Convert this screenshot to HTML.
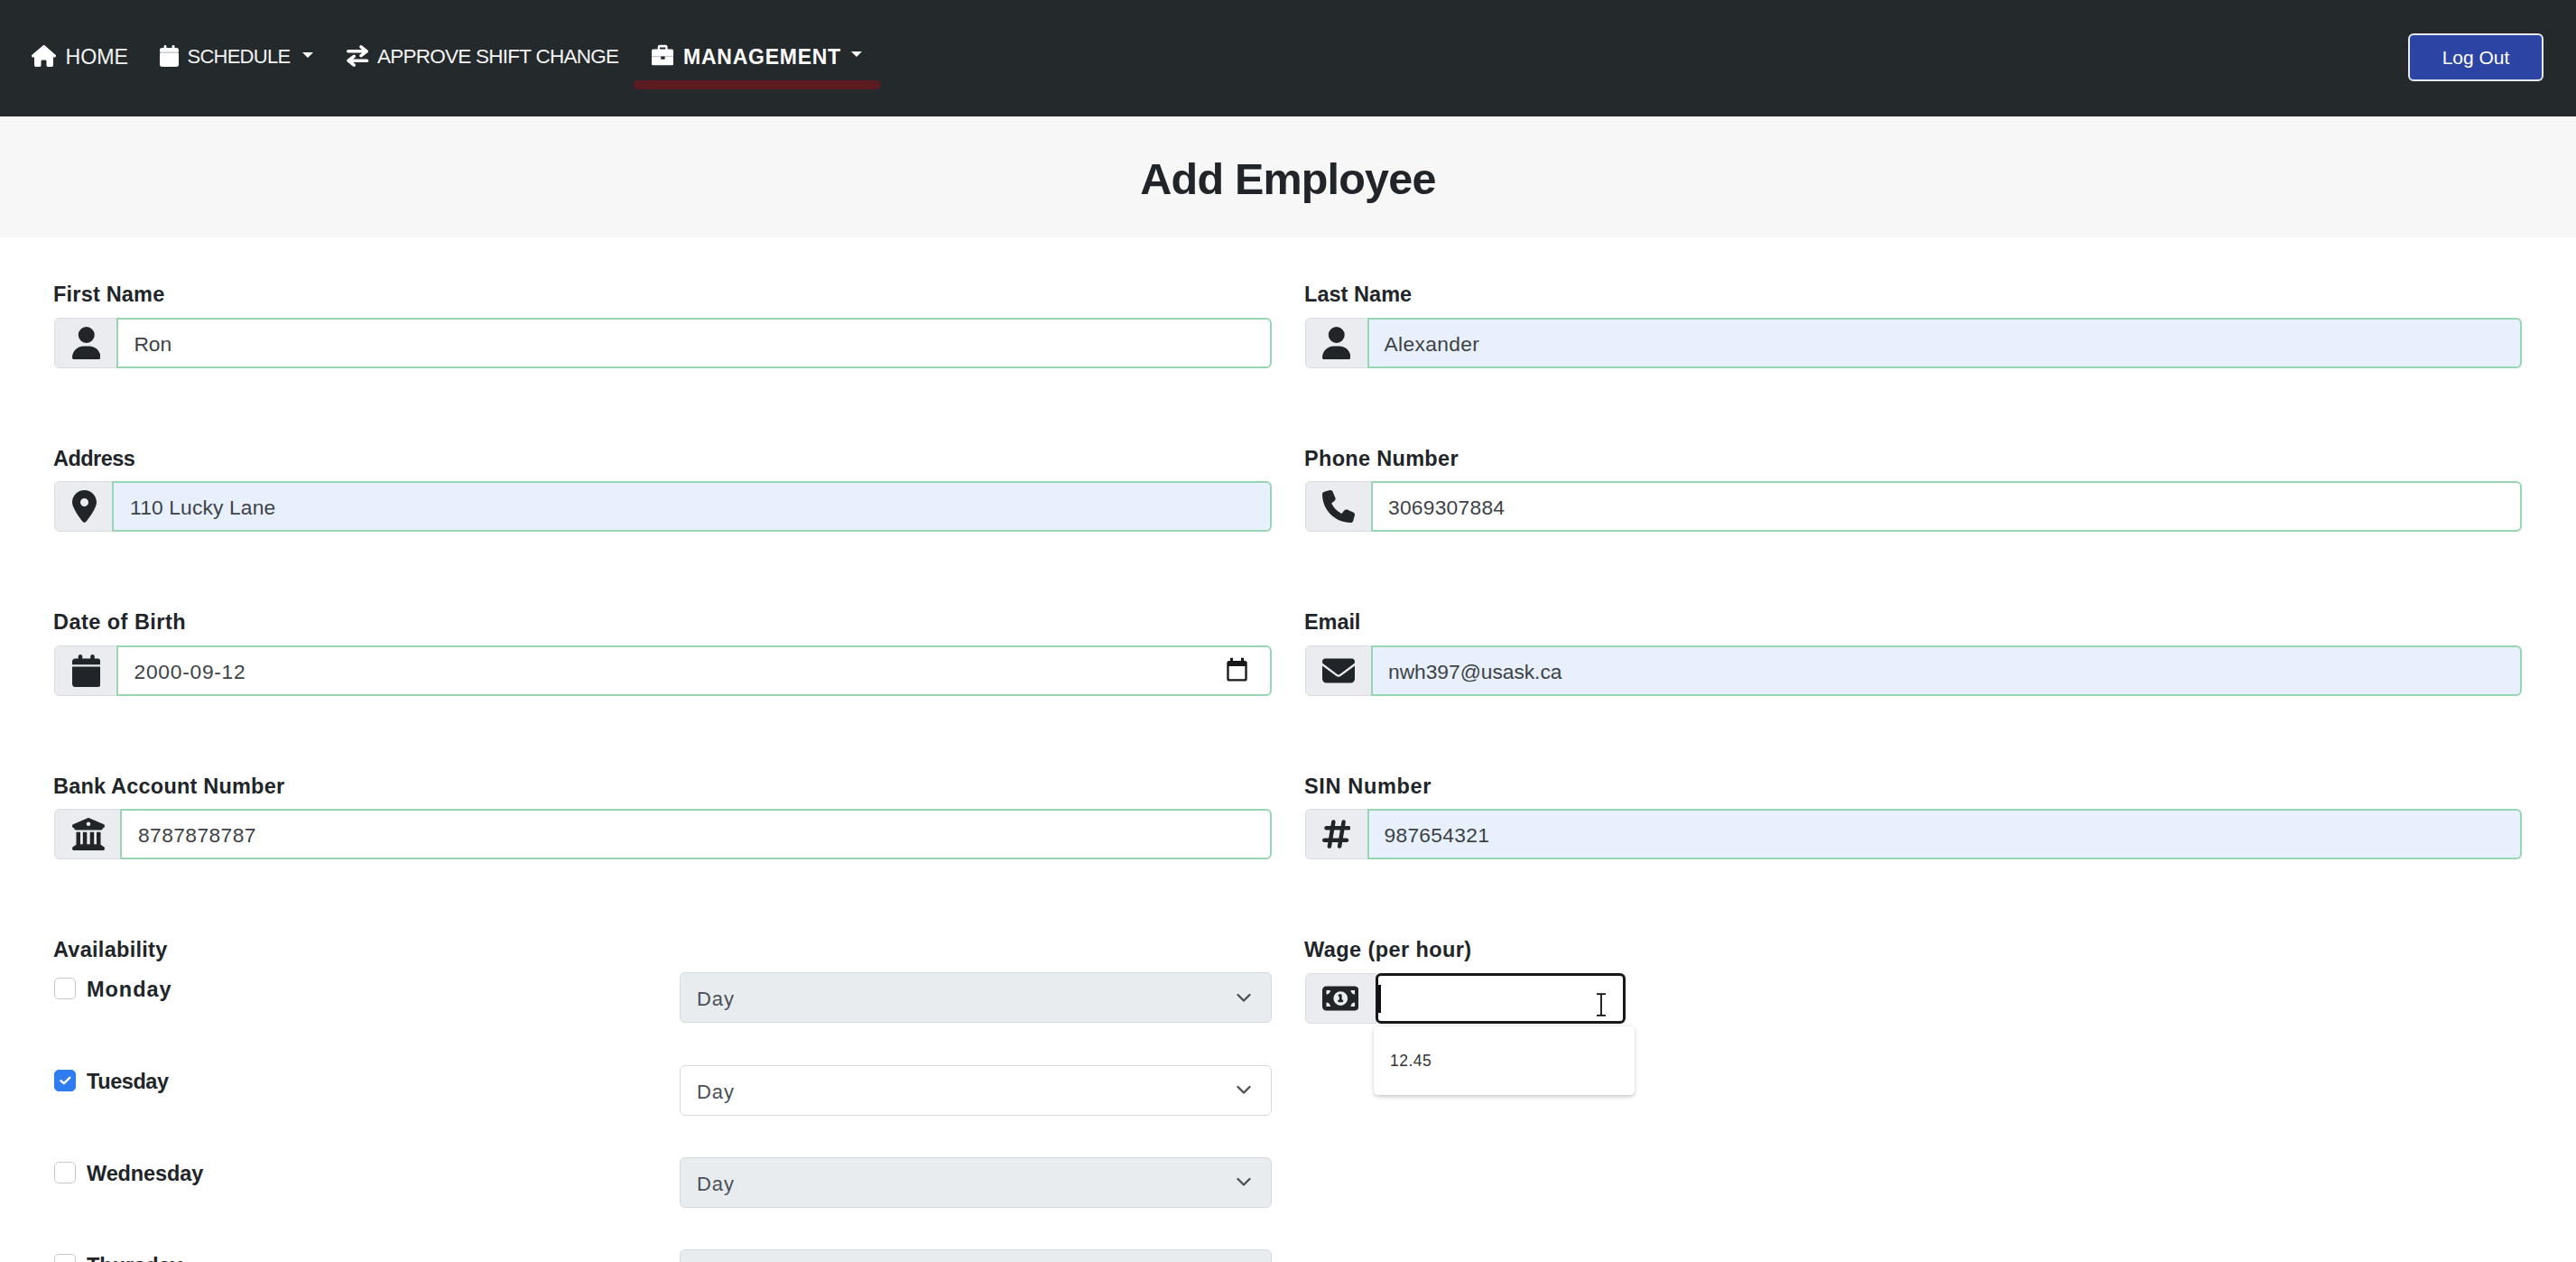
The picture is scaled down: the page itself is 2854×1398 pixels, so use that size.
<!DOCTYPE html>
<html><head><meta charset="utf-8"><title>Add Employee</title>
<style>
*{box-sizing:border-box;margin:0;padding:0}
html,body{width:2854px;height:1398px;overflow:hidden;background:#fff;font-family:"Liberation Sans",sans-serif;color:#212529}
.abs{position:absolute}
#nav{position:absolute;left:0;top:0;width:2854px;height:129px;background:#24292c}
.nt{position:absolute;top:47.7px;height:30px;line-height:30px;font-size:23px;color:#f4f4f4;white-space:nowrap}
.caret{position:absolute;width:0;height:0;border-left:6.7px solid transparent;border-right:6.7px solid transparent;border-top:6.7px solid #fff}
#logout{position:absolute;left:2668px;top:37px;width:150px;height:53px;border:2px solid #e6eaec;border-radius:6px;background:#2c44a4;color:#fff;font-size:21px;text-align:center;line-height:49px}
#band{position:absolute;left:0;top:129px;width:2854px;height:134px;background:#f7f7f7}
#title{position:absolute;left:0;top:170px;width:2854px;text-align:center;font-size:48.5px;font-weight:bold;line-height:56px;letter-spacing:-0.8px;color:#212529}
.lbl{position:absolute;font-size:23.5px;font-weight:bold;line-height:28px;color:#212529;white-space:nowrap}
.ibox{position:absolute;height:56px;background:#eaecef;border:1.5px solid #d9dde0;border-radius:6px 0 0 6px}
.inp{position:absolute;height:56px;border:2px solid #98d6b3;border-radius:0 6px 6px 0;background:#fff;font-size:22.8px;line-height:52px;padding-top:1px;padding-left:17px;color:#3d4247;white-space:nowrap}
.af{background:#e8f0fd}
.sel{position:absolute;left:753px;width:656px;height:56px;border:1.5px solid #d6dadd;border-radius:6px;background:#e9ecef;font-size:22px;line-height:53px;padding-top:2px;padding-left:18px;color:#495057}
.sel svg{position:absolute;right:22px;top:21.5px}
.cb{position:absolute;left:60px;width:24px;height:24px;border:1.5px solid #c4c8cc;border-radius:5px;background:#fff}
.day{position:absolute;left:96px;font-size:23.5px;font-weight:bold;line-height:28px;color:#212529}
</style></head><body>
<div id="nav">
<svg class="abs" style="left:35px;top:50px" width="27" height="24" viewBox="0 0 576 512"><path fill="#fff" d="M575.8 255.5c0 18-15 32.1-32 32.1h-32l.7 160.2c0 2.7-.2 5.4-.5 8.1V472c0 22.1-17.9 40-40 40H456c-1.1 0-2.2 0-3.3-.1-1.4.1-2.8.1-4.2.1H416 392c-22.1 0-40-17.9-40-40V448 384c0-17.7-14.3-32-32-32H256c-17.7 0-32 14.3-32 32v64 24c0 22.1-17.9 40-40 40H160 128.1c-1.5 0-3-.1-4.5-.2-1.2.1-2.4.2-3.6.2H104c-22.1 0-40-17.9-40-40V360c0-.9 0-1.9.1-2.8V287.6H32c-18 0-32-14-32-32.1 0-9 3-17 10-24L266.4 8c7-7 15-8 22-8s15 2 21 7L564.8 231.5c8 7 12 15 11 24z"/></svg>
<div class="nt" style="left:72.5px;font-size:23.2px;letter-spacing:0px">HOME</div>
<svg class="abs" style="left:177px;top:50px" width="21" height="24" viewBox="0 0 448 512"><rect x="8" y="150" width="432" height="50" fill="#c9cdd1"/><path fill="#fff" d="M96 32V64H48C21.5 64 0 85.5 0 112v48H448V112c0-26.5-21.5-48-48-48H352V32c0-17.7-14.3-32-32-32s-32 14.3-32 32V64H160V32c0-17.7-14.3-32-32-32S96 14.3 96 32zM448 192H0V464c0 26.5 21.5 48 48 48H400c26.5 0 48-21.5 48-48V192z"/></svg>
<div class="nt" style="left:207.5px;font-size:22px;letter-spacing:-0.75px">SCHEDULE</div>
<div class="caret" style="left:334.5px;top:58px"></div>
<svg class="abs" style="left:378px;top:44px" width="40" height="36" viewBox="0 0 40 36"><g fill="none" stroke="#fff" stroke-width="3.6" stroke-linecap="round" stroke-linejoin="round"><path d="M7.8 12.8H28M22 7.9L28.2 12.8L22 17.7"/><path d="M28.6 23.2H8.2M14.2 18.3L8 23.2L14.2 28.1"/></g></svg>
<div class="nt" style="left:418px;font-size:22.5px;letter-spacing:-0.75px">APPROVE SHIFT CHANGE</div>
<svg class="abs" style="left:715px;top:44px" width="40" height="36" viewBox="0 0 40 36"><rect x="7" y="10.6" width="24" height="17.7" rx="1.6" fill="#fff"/><path fill="#fff" d="M13.7 11.5V8a2.3 2.3 0 0 1 2.3-2.3h6.3a2.3 2.3 0 0 1 2.3 2.3v3.5h-2.3V8.6h-6.3v2.9z"/><rect x="7" y="17.9" width="24" height="1.3" fill="#c3c7cb"/><rect x="17.1" y="18.6" width="4.6" height="3.1" rx="1" fill="#24292c"/></svg>
<div class="nt" style="left:757px;font-weight:bold;color:#fff;font-size:23px;letter-spacing:0.75px">MANAGEMENT</div>
<div class="caret" style="left:943.3px;top:57px"></div>
<div class="abs" style="left:702px;top:89px;width:274px;height:10px;border-radius:5px;background:#5c1a21"></div>
<div id="logout">Log Out</div>
</div>
<div id="band"></div>
<div id="title">Add Employee</div>
<div id="form">
<div class="lbl" style="left:59px;top:312.2px;letter-spacing:0.2px;">First Name</div>
<div class="ibox" style="left:60px;top:351.5px;width:69.5px"></div>
<svg class="abs" style="left:79.5px;top:361.7px" width="31.50" height="36" viewBox="0 0 448 512"><path fill="#212529" d="M224 256A128 128 0 1 0 224 0a128 128 0 1 0 0 256zm-45.7 48C79.8 304 0 383.8 0 482.3C0 498.7 13.3 512 29.7 512H418.3c16.4 0 29.7-13.3 29.7-29.7C448 383.8 368.2 304 269.7 304H178.3z"/></svg>
<div class="inp" style="left:128.5px;top:351.5px;width:1280.5px;padding-left:18px;letter-spacing:-0.1px;">Ron</div>
<div class="lbl" style="left:1445px;top:312.2px;letter-spacing:0.037px;">Last Name</div>
<div class="ibox" style="left:1446px;top:351.5px;width:69.5px"></div>
<svg class="abs" style="left:1464.5px;top:361.7px" width="31.50" height="36" viewBox="0 0 448 512"><path fill="#212529" d="M224 256A128 128 0 1 0 224 0a128 128 0 1 0 0 256zm-45.7 48C79.8 304 0 383.8 0 482.3C0 498.7 13.3 512 29.7 512H418.3c16.4 0 29.7-13.3 29.7-29.7C448 383.8 368.2 304 269.7 304H178.3z"/></svg>
<div class="inp af" style="left:1514.5px;top:351.5px;width:1279.5px;padding-left:17px;letter-spacing:0.35px;">Alexander</div>
<div class="lbl" style="left:59px;top:493.8px;letter-spacing:-0.55px;">Address</div>
<div class="ibox" style="left:60px;top:533.0px;width:65.0px"></div>
<svg class="abs" style="left:79.5px;top:543.2px" width="27.00" height="36" viewBox="0 0 384 512"><path fill="#212529" d="M215.7 499.2C267 435 384 279.4 384 192C384 86 298 0 192 0S0 86 0 192c0 87.4 117 243 168.3 307.2c12.3 15.3 35.1 15.3 47.4 0zM192 128a64 64 0 1 1 0 128 64 64 0 1 1 0-128z"/></svg>
<div class="inp af" style="left:124.0px;top:533.0px;width:1285.0px;padding-left:18px;letter-spacing:0.146px;">110 Lucky Lane</div>
<div class="lbl" style="left:1445px;top:493.8px;letter-spacing:0.309px;">Phone Number</div>
<div class="ibox" style="left:1446px;top:533.0px;width:74.0px"></div>
<svg class="abs" style="left:1464.5px;top:543.2px" width="36.00" height="36" viewBox="0 0 512 512"><path fill="#212529" d="M164.9 24.6c-7.7-18.6-28-28.5-47.4-23.2l-88 24C12.1 30.2 0 46 0 64C0 311.4 200.6 512 448 512c18 0 33.8-12.1 38.6-29.5l24-88c5.3-19.4-4.6-39.7-23.2-47.4l-96-40c-16.3-6.8-35.2-2.1-46.3 11.6L304.7 368C234.3 334.7 177.3 277.7 144 207.3L193.3 167c13.7-11.2 18.4-30 11.6-46.3l-40-96z"/></svg>
<div class="inp" style="left:1519.0px;top:533.0px;width:1275.0px;padding-left:17px;letter-spacing:0.244px;">3069307884</div>
<div class="lbl" style="left:59px;top:675.2px;letter-spacing:0.467px;">Date of Birth</div>
<div class="ibox" style="left:60px;top:714.5px;width:69.5px"></div>
<svg class="abs" style="left:79.5px;top:724.7px" width="31.50" height="36" viewBox="0 0 448 512"><path fill="#212529" d="M96 32V64H48C21.5 64 0 85.5 0 112v48H448V112c0-26.5-21.5-48-48-48H352V32c0-17.7-14.3-32-32-32s-32 14.3-32 32V64H160V32c0-17.7-14.3-32-32-32S96 14.3 96 32zM448 192H0V464c0 26.5 21.5 48 48 48H400c26.5 0 48-21.5 48-48V192z"/></svg>
<div class="inp" style="left:128.5px;top:714.5px;width:1280.5px;padding-left:18px;letter-spacing:0.733px;">2000-09-12</div>
<svg class="abs" style="left:1358.2px;top:727.5px" width="25" height="27.5" viewBox="0 0 24 27"><path fill="#18191b" d="M4.6 0.8h3v3.2h8.8V0.8h3v3.2h1.1a2.5 2.5 0 0 1 2.5 2.5v17a2.5 2.5 0 0 1-2.5 2.5h-17A2.5 2.5 0 0 1 1 23.5v-17A2.5 2.5 0 0 1 3.5 4h1.1zM3.3 9.8v13.2c0 .5.4.9.9.9h15.6c.5 0 .9-.4.9-.9V9.8z"/></svg>
<div class="lbl" style="left:1445px;top:675.2px;letter-spacing:-0.075px;">Email</div>
<div class="ibox" style="left:1446px;top:714.5px;width:74.0px"></div>
<svg class="abs" style="left:1464.5px;top:724.7px" width="36.00" height="36" viewBox="0 0 512 512"><path fill="#212529" d="M48 64C21.5 64 0 85.5 0 112c0 15.1 7.1 29.3 19.2 38.4L236.8 313.6c11.4 8.5 27 8.5 38.4 0L492.8 150.4c12.1-9.1 19.2-23.3 19.2-38.4c0-26.5-21.5-48-48-48H48zM0 176V384c0 35.3 28.7 64 64 64H448c35.3 0 64-28.7 64-64V176L294.4 339.2c-22.8 17.1-54 17.1-76.8 0L0 176z"/></svg>
<div class="inp af" style="left:1519.0px;top:714.5px;width:1275.0px;padding-left:17px;letter-spacing:-0.036px;">nwh397@usask.ca</div>
<div class="lbl" style="left:59px;top:856.8px;letter-spacing:0.2px;">Bank Account Number</div>
<div class="ibox" style="left:60px;top:896.0px;width:74.0px"></div>
<svg class="abs" style="left:79.5px;top:906.2px" width="36.00" height="36" viewBox="0 0 512 512"><path fill="#212529" d="M243.4 2.6l-224 96c-14 6-21.8 21-18.7 35.8S16.8 160 32 160v8c0 13.3 10.7 24 24 24H456c13.3 0 24-10.7 24-24v-8c15.2 0 28.3-10.7 31.3-25.6s-4.8-29.9-18.7-35.8l-224-96c-8-3.4-17.2-3.4-25.2 0zM128 224H64V420.3c-.6 .3-1.200 .7-1.8 1.1l-48 32c-11.7 7.8-17 22.4-12.9 35.9S17.9 512 32 512H480c14.1 0 26.5-9.200 30.6-22.7s-1.1-28.1-12.9-35.9l-48-32c-.6-.4-1.2-.7-1.8-1.1V224H384V416H344V224H280V416H232V224H168V416H128V224zM256 64a32 32 0 1 1 0 64 32 32 0 1 1 0-64z"/></svg>
<div class="inp" style="left:133.0px;top:896.0px;width:1276.0px;padding-left:18px;letter-spacing:0.4px;">8787878787</div>
<div class="lbl" style="left:1445px;top:856.8px;letter-spacing:0.644px;">SIN Number</div>
<div class="ibox" style="left:1446px;top:896.0px;width:69.5px"></div>
<svg class="abs" style="left:1464.5px;top:906.2px" width="31.50" height="36" viewBox="0 0 448 512"><path fill="#212529" d="M181.3 32.4c17.4 2.9 29.2 19.4 26.3 36.8L197.8 128h95.1l11.5-69.3c2.9-17.4 19.4-29.2 36.8-26.3s29.2 19.4 26.3 36.8L357.8 128H416c17.7 0 32 14.3 32 32s-14.3 32-32 32H347.1L325.8 320H384c17.7 0 32 14.3 32 32s-14.300 32-32 32H315.1l-11.5 69.3c-2.9 17.4-19.4 29.2-36.8 26.3s-29.2-19.4-26.3-36.8l9.8-58.7H155.1l-11.5 69.3c-2.9 17.4-19.4 29.2-36.8 26.3s-29.2-19.4-26.3-36.8L90.2 384H32c-17.7 0-32-14.3-32-32s14.3-32 32-32h68.9l21.3-128H64c-17.7 0-32-14.3-32-32s14.3-32 32-32h68.9l11.5-69.3c2.9-17.4 19.4-29.2 36.8-26.3zM187.1 192L165.8 320h95.1l21.3-128H187.1z"/></svg>
<div class="inp af" style="left:1514.5px;top:896.0px;width:1279.5px;padding-left:17px;letter-spacing:0.275px;">987654321</div>
<div class="lbl" style="left:59px;top:1038.2px;letter-spacing:0.273px;">Availability</div>
<div class="lbl" style="left:1445px;top:1038.2px;letter-spacing:0.421px;">Wage (per hour)</div>
<div class="ibox" style="left:1446px;top:1077.5px;width:78.5px"></div>
<svg class="abs" style="left:1464.5px;top:1087.7px" width="40.50" height="36" viewBox="0 0 576 512"><path fill="#212529" d="M64 64C28.7 64 0 92.7 0 128V384c0 35.3 28.7 64 64 64H512c35.3 0 64-28.7 64-64V128c0-35.3-28.7-64-64-64H64zm64 320H64V320c35.3 0 64 28.7 64 64zM64 192V128h64c0 35.3-28.7 64-64 64zM448 384c0-35.3 28.7-64 64-64v64H448zm64-192c-35.3 0-64-28.7-64-64h64v64zM176 256a112 112 0 1 1 224 0 112 112 0 1 1 -224 0zm76-48c0 9.7 6.9 17.7 16 19.6V276h-4c-11 0-20 9-20 20s9 20 20 20h24 24c11 0 20-9 20-20s-9-20-20-20h-4V208c0-11-9-20-20-20H272c-11 0-20 9-20 20z"/></svg>
<div class="abs" style="left:1523.5px;top:1077.5px;width:277.5px;height:56px;border:3px solid #16181a;border-radius:6px;background:#fff"></div>
<div class="abs" style="left:1527px;top:1090.5px;width:2.5px;height:31px;background:#111"></div>
<svg class="abs" style="left:1768px;top:1100px" width="12" height="26" viewBox="0 0 12 26"><path d="M1 1.2h10M1 24.8h10M6 1.2v23.6" stroke="#111" stroke-width="1.8" fill="none"/></svg>
<div class="abs" style="left:1522px;top:1137px;width:289px;height:76px;background:#fff;border-radius:5px;box-shadow:0 1.5px 4px rgba(0,0,0,.22)"></div>
<div class="abs" style="left:1540px;top:1163px;font-size:17.5px;line-height:24px;color:#333;letter-spacing:0.5px">12.45</div>
<div class="sel" style="top:1077.4px;background:#e9ecef"><span style="letter-spacing:0.9px">Day</span><svg width="16" height="11" viewBox="0 0 16 11"><path d="M1.5 2l6.5 6.5L14.5 2" stroke="#4a5056" stroke-width="2.3" fill="none" stroke-linecap="round" stroke-linejoin="round"/></svg></div>
<div class="cb" style="top:1083.3px"></div>
<div class="day" style="top:1081.8px;letter-spacing:0.96px;">Monday</div>
<div class="sel" style="top:1179.6px;background:#fff"><span style="letter-spacing:0.9px">Day</span><svg width="16" height="11" viewBox="0 0 16 11"><path d="M1.5 2l6.5 6.5L14.5 2" stroke="#4a5056" stroke-width="2.3" fill="none" stroke-linecap="round" stroke-linejoin="round"/></svg></div>
<div class="cb" style="top:1185.2px;background:#2f7cf0;border-color:#2f7cf0"><svg class="abs" style="left:-1.5px;top:-1.5px" width="24" height="24" viewBox="0 0 24 24"><path d="M7.4 12.3L10.8 15.1L17.2 8.9" stroke="#fff" stroke-width="2.5" fill="none" stroke-linecap="round" stroke-linejoin="round"/></svg></div>
<div class="day" style="top:1183.8px;letter-spacing:-0.417px;">Tuesday</div>
<div class="sel" style="top:1281.8px;background:#e9ecef"><span style="letter-spacing:0.9px">Day</span><svg width="16" height="11" viewBox="0 0 16 11"><path d="M1.5 2l6.5 6.5L14.5 2" stroke="#4a5056" stroke-width="2.3" fill="none" stroke-linecap="round" stroke-linejoin="round"/></svg></div>
<div class="cb" style="top:1287.1px"></div>
<div class="day" style="top:1285.6px;letter-spacing:-0.113px;">Wednesday</div>
<div class="sel" style="top:1384.0px;background:#e9ecef"><span style="letter-spacing:0.9px">Day</span><svg width="16" height="11" viewBox="0 0 16 11"><path d="M1.5 2l6.5 6.5L14.5 2" stroke="#4a5056" stroke-width="2.3" fill="none" stroke-linecap="round" stroke-linejoin="round"/></svg></div>
<div class="cb" style="top:1389.0px"></div>
<div class="day" style="top:1387.5px;letter-spacing:0px;">Thursday</div>
</div>
</body></html>
